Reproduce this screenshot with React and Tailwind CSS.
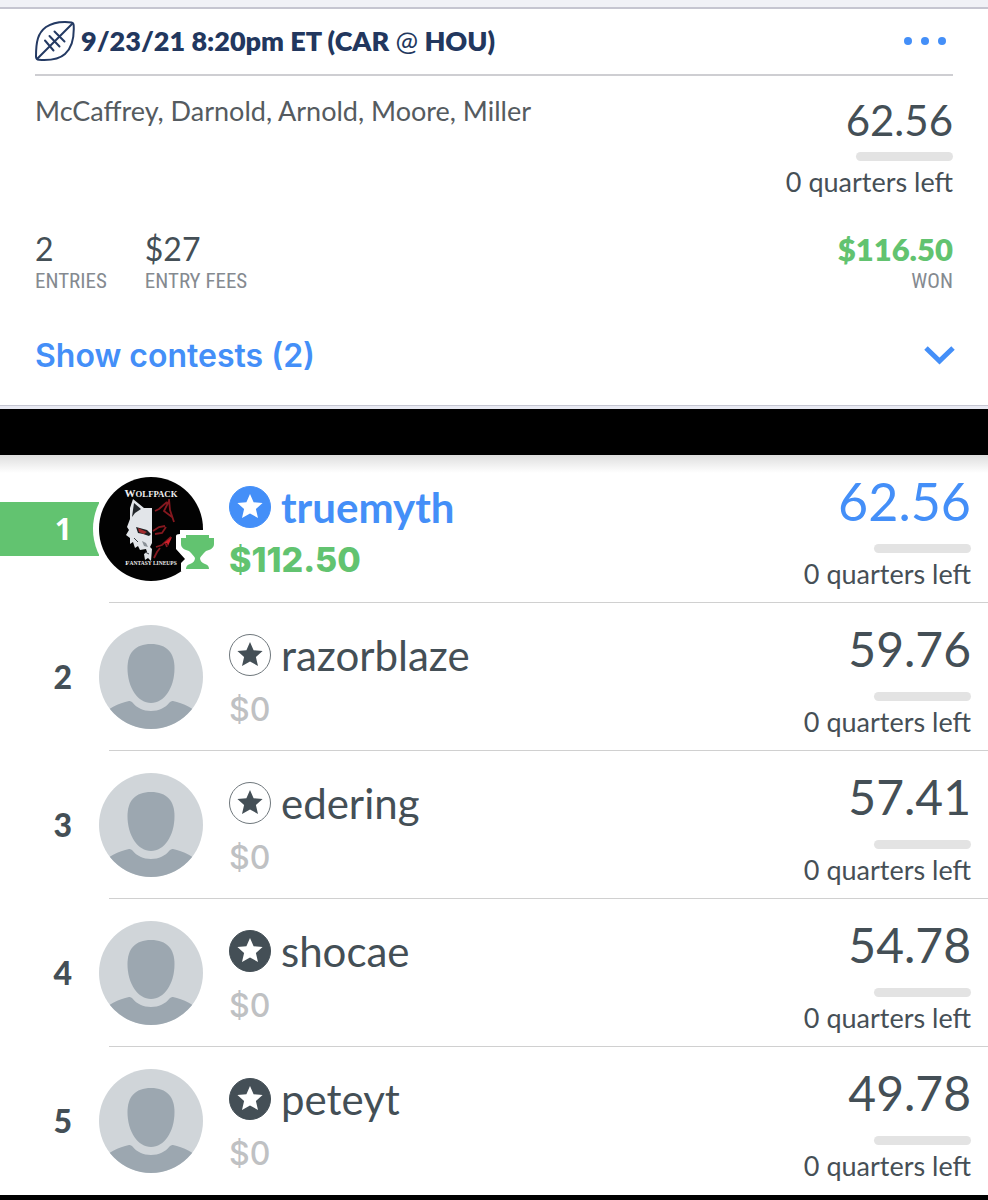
import React from "react";

const players = [
  { rank: 1, name: "truemyth", prize: "$112.50", score: "62.56", badge: "blue", leader: true },
  { rank: 2, name: "razorblaze", prize: "$0", score: "59.76", badge: "outline" },
  { rank: 3, name: "edering", prize: "$0", score: "57.41", badge: "outline" },
  { rank: 4, name: "shocae", prize: "$0", score: "54.78", badge: "dark" },
  { rank: 5, name: "peteyt", prize: "$0", score: "49.78", badge: "dark" },
];

const badgeColors = {
  blue: { disc: "#448ff8", ring: "#448ff8", star: "#ffffff" },
  outline: { disc: "#ffffff", ring: "#6f777c", star: "#444f56" },
  dark: { disc: "#444f56", ring: "#444f56", star: "#ffffff" },
};

function FootballIcon() {
  return (
    <svg viewBox="0 0 40 40" className="size-10 shrink-0" fill="none" stroke="#243a63" strokeWidth="2" strokeLinecap="round" strokeLinejoin="round" aria-hidden="true">
      <path d="M36.500 1.400C28 .4 18 1.500 11 6C3 12 1 20 1 35.500Q1 38.600 4 38.800C14 39.500 24 38.500 30 33C37 27 39.300 17 38.700 4.500Q38.600 1.700 36.500 1.400Z" />
      <path d="M2.500 37.500L37.500 2.500M10 19.500L18.500 29.500M14.500 15L24.500 25.500M19.500 10.500L29.500 20.500" />
    </svg>
  );
}

function StarBadge({ kind }) {
  const c = badgeColors[kind];
  return (
    <svg viewBox="0 0 42 42" className="size-[42px] shrink-0" aria-hidden="true">
      <circle cx="21" cy="21" r="20.500" fill={c.disc} stroke={c.ring} strokeWidth="1" />
      <path d="M21 8L24.600 16.300L33.600 17.100L26.900 23.100L29 32L21 27.400L13 32L15.100 23.100L8.400 17.100L17.400 16.300Z" fill={c.star} />
    </svg>
  );
}

function DefaultAvatar() {
  return (
    <svg viewBox="0 0 104 104" className="size-[104px] shrink-0" aria-hidden="true">
      <defs>
        <clipPath id="avatar-disc"><circle cx="52" cy="52" r="52" /></clipPath>
      </defs>
      <g clipPath="url(#avatar-disc)">
        <rect width="104" height="104" fill="#d0d5d9" />
        <path d="M52 19C36 19 28.500 28 28.500 43C28.500 63 39 78 52 78C65 78 75.500 63 75.500 43C75.500 28 68 19 52 19Z" fill="#9ca7b0" />
        <path d="M0 104V92C8 84 20 78 30 76Q32 75.700 33.500 77.500C38 83 44 86 52 86C60 86 66 83 70.500 77.500Q72 75.700 74 76C84 78 96 84 104 92V104Z" fill="#9ca7b0" />
      </g>
    </svg>
  );
}

function WolfAvatar() {
  return (
    <svg viewBox="0 0 118 104" className="h-[104px] w-[118px] shrink-0" role="img" aria-label="Wolfpack Fantasy Lineups">
      <circle cx="52" cy="52" r="52" fill="#020202" />
      <text x="52" y="20" textAnchor="middle" fontFamily="Liberation Serif, serif" fontWeight="700" fontSize="11" fill="#f0f0f0">W<tspan fontSize="8.700">OLFPACK</tspan></text>
      <path d="M34 22L45 31L53 31V66L51 70L53 72L52 84L49 81L46 83L45 77L48 75L47 72L41 73L39 69L36 71L34 65L31 67L31 61L27 58L30 53L28 50L31 42L31 31Z" fill="#e2e5e9" />
      <path d="M35 26L42 32L36 36L33 40Z" fill="#22262a" />
      <path d="M37 50L48 53L52 57L50 59L44 57L39 56Z" fill="#1d1f22" />
      <path d="M39 51L48 55L45 57L40 55Z" fill="#a32c2f" />
      <path d="M43 64L47 66L49 70L45 69Z" fill="#8b9197" />
      <path d="M35 61L39 65M46 75L50 77" stroke="#3b4045" strokeWidth="1" fill="none" />
      <path d="M70 22L71 33L75 45M68 25L60 32L56 34M70 24L65 34L73 40M54 54L60 50L66 49M56 57L63 56L67 50M72 60L63 68L57 70M66 65L68 70M61 71L58 75L55 81" stroke="#85181f" strokeWidth="1.800" fill="none" />
      <path d="M73 60L65 66L68 66L69 69Z" fill="#d0202a" />
      <text x="52" y="88" textAnchor="middle" fontFamily="Liberation Serif, serif" fontWeight="700" fontSize="7" fill="#ececec">F<tspan fontSize="5.500">ANTASY LINEUPS</tspan></text>
      <path d="M81 53H118V94H82V86L86 82L77 72V59Q77 57 81 57Z" fill="#ffffff" />
      <path d="M87 58H110V61H115V67C115 71 111 73 107 74C104 77 102 79 101 81C101 84 103 86 106 87Q110 88 110 92H87Q87 88 91 87C94 86 96 84 96 81C95 79 93 77 90 74C86 73 82 71 82 67V61H87Z" fill="#62c370" />
    </svg>
  );
}

function ScoreBlock({ score, className }) {
  return (
    <div className="flex flex-col items-end">
      <div className={className}>{score}</div>
      <div className="h-[9px] w-[97px] rounded-full bg-[#e3e3e3]" />
      <div className="mt-[3px] text-[27px] leading-9 text-[#464f56]">0 quarters left</div>
    </div>
  );
}

function PlayerRow({ player, last }) {
  const { rank, name, prize, score, badge, leader } = player;
  return (
    <li className="relative flex h-[148px] items-start pr-[17px] pt-px">
      <div className={leader ? "mt-[46px] h-[54px] w-[99px] shrink-0 bg-[#62c370] pl-11 pt-1" : "mt-[46px] h-[54px] w-[99px] shrink-0 pl-11 pt-1"}>
        <span className={leader ? "block w-7 text-right font-['Open_Sans',sans-serif] text-[30px] font-bold leading-[46px] text-white" : "block w-7 text-right font-[Lato,sans-serif] text-[32px] font-black leading-[46px] text-[#444f56]"}>{rank}</span>
      </div>
      <div className={leader ? "relative mt-[21px] h-[104px] w-[130px] shrink-0 before:absolute before:-left-[6px] before:-top-[6px] before:size-[116px] before:rounded-full before:bg-white" : "mt-[21px] h-[104px] w-[130px] shrink-0"}>
        <div className="relative">{leader ? <WolfAvatar /> : <DefaultAvatar />}</div>
      </div>
      <div className="flex-1 pt-[30px]">
        <div className="flex items-center gap-[10px]">
          <StarBadge kind={badge} />
          <a href={`#${name}`} className={leader ? "text-[42px] font-bold leading-[42px] text-[#448ff8]" : "text-[42px] leading-[42px] text-[#444f56]"}>{name}</a>
        </div>
        <div className={leader ? "mt-4 font-[Inter,sans-serif] text-[34px] font-extrabold leading-8 text-[#62c370]" : "mt-4 font-[Inter,sans-serif] text-[32px] font-medium leading-9 text-[#bfc1c3]"}>{prize}</div>
      </div>
      <div className="pt-4">
        <ScoreBlock score={score} className={leader ? "mb-[14px] text-[52px] leading-[58px] text-[#448ff8]" : "mb-[14px] text-[48px] leading-[58px] text-[#444f56]"} />
      </div>
      {!last && <div className="absolute bottom-0 left-[109px] right-0 h-px bg-[#d0d0d0]" />}
    </li>
  );
}

export default function App() {
  return (
    <main className="w-full bg-white font-[Lato,sans-serif]">
      <section className="border-b border-[#c5c6d2] bg-white">
        <div className="h-[9px] border-b-2 border-[#c5c5d0] bg-[#f0f1f6]" />
        <div className="px-[35px]">
          <header className="flex h-[67px] items-center justify-between border-b-2 border-[#ceced2] pb-[2px]">
            <div className="flex items-center gap-[6px]">
              <FootballIcon />
              <h1 className="text-[27px] font-extrabold leading-9 text-[#22375e]">9/23/21 8:20pm ET (CAR <span className="font-normal">@</span> HOU)</h1>
            </div>
            <button type="button" aria-label="More options" className="flex gap-[9px] px-[7px] py-2">
              <span className="size-2 rounded-full bg-[#448ff8]" />
              <span className="size-2 rounded-full bg-[#448ff8]" />
              <span className="size-2 rounded-full bg-[#448ff8]" />
            </button>
          </header>
          <div className="flex items-start justify-between pt-4">
            <p className="pt-px text-[27px] leading-9 text-[#555b60]">McCaffrey, Darnold, Arnold, Moore, Miller</p>
            <ScoreBlock score="62.56" className="mb-2 pt-1 text-[42px] leading-[48px] text-[#444f56]" />
          </div>
          <div className="mt-[31px] flex items-start justify-between">
            <dl className="flex gap-[38px]">
              <div className="flex flex-col-reverse">
                <dt className="font-['Liberation_Sans_Narrow','Roboto_Condensed',Roboto,sans-serif] text-[21px] leading-7 text-[#858a90]">ENTRIES</dt>
                <dd className="text-[32px] leading-9 text-[#444f56]">2</dd>
              </div>
              <div className="flex flex-col-reverse">
                <dt className="font-['Liberation_Sans_Narrow','Roboto_Condensed',Roboto,sans-serif] text-[21px] leading-7 text-[#858a90]">ENTRY FEES</dt>
                <dd className="text-[32px] leading-9 text-[#444f56]">$27</dd>
              </div>
            </dl>
            <dl className="flex flex-col-reverse text-right">
              <dt className="font-['Liberation_Sans_Narrow','Roboto_Condensed',Roboto,sans-serif] text-[21px] leading-7 text-[#858a90]">WON</dt>
              <dd className="text-[31px] font-extrabold leading-9 text-[#62c370]">$116.50</dd>
            </dl>
          </div>
          <button type="button" className="mt-[33px] flex h-[77px] w-full items-start justify-between pt-2 text-left font-[Inter,sans-serif] text-[32px] font-semibold leading-10 text-[#448ff8]">
            Show contests (2)
            <svg viewBox="0 0 30 20" className="mt-[10px] h-5 w-[30px] overflow-visible" fill="none" stroke="#448ff8" strokeWidth="5" aria-hidden="true">
              <path d="M3 2L16.500 15L30 2" />
            </svg>
          </button>
        </div>
      </section>
      <div className="h-[3px] bg-[#e8e9f2]" />
      <div className="h-[46px] bg-black" />
      <ol className="bg-linear-to-b from-[#dedede] to-white to-[18px] bg-no-repeat">
        {players.map((p, i) => (
          <PlayerRow key={p.rank} player={p} last={i === players.length - 1} />
        ))}
      </ol>
      <div className="h-[5px] bg-black" />
    </main>
  );
}
